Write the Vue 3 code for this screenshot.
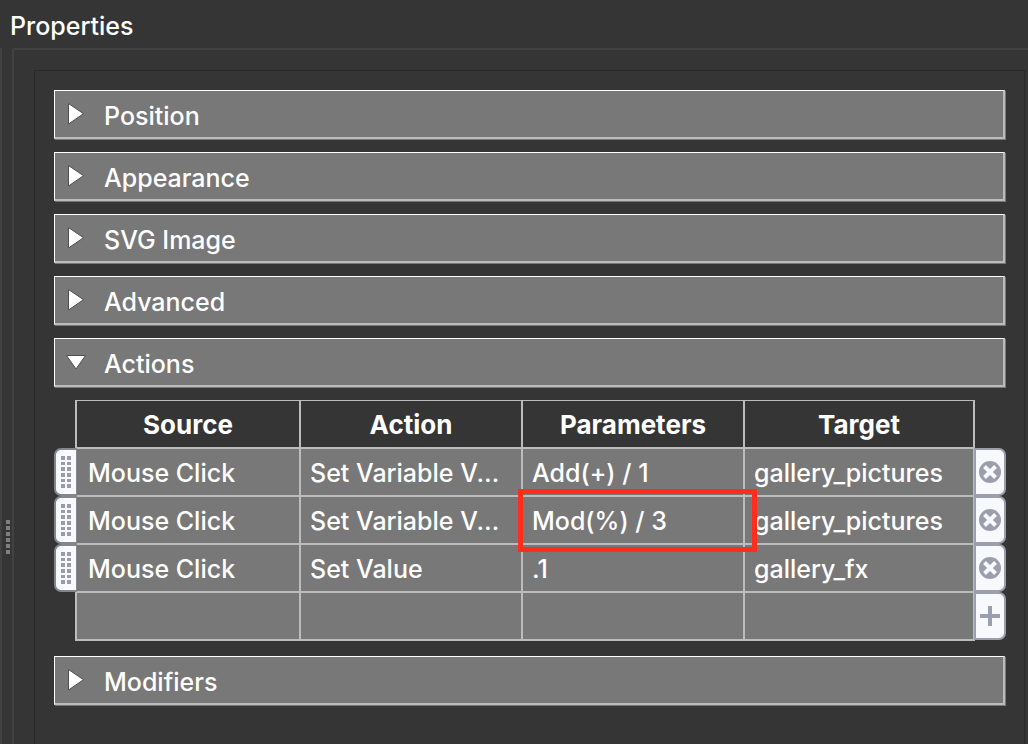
<script setup>
import { ref } from 'vue'

const before = ref([
  { name: 'Position', open: false },
  { name: 'Appearance', open: false },
  { name: 'SVG Image', open: false },
  { name: 'Advanced', open: false },
  { name: 'Actions', open: true },
])
const after = ref([{ name: 'Modifiers', open: false }])

const rows = ref([
  { source: 'Mouse Click', action: 'Set Variable Value', params: 'Add(+) / 1', target: 'gallery_pictures' },
  { source: 'Mouse Click', action: 'Set Variable Value', params: 'Mod(%) / 3', target: 'gallery_pictures', marked: true },
  { source: 'Mouse Click', action: 'Set Value', params: '.1', target: 'gallery_fx' },
])
</script>

<template>
  <main class="window">
    <h1 class="title">Properties</h1>
    <div class="body">
      <div class="splitter">
        <div class="grip"><i v-for="n in 6" :key="n"></i></div>
      </div>
      <section class="frame">
        <div class="panel">
          <button v-for="s in before" :key="s.name" type="button" class="section" :aria-expanded="s.open">
            <svg v-if="s.open" class="arrow" viewBox="0 0 22 22" aria-hidden="true">
              <path d="M1.5 4.5H20.5L11 18Z" fill="#fff" stroke="#505050" />
            </svg>
            <svg v-else class="arrow" viewBox="0 0 22 22" aria-hidden="true">
              <path d="M3.500 .5V21L18.500 10.700Z" fill="#fff" stroke="#505050" />
            </svg>
            <span class="label">{{ s.name }}</span>
          </button>

          <table class="actions">
            <colgroup>
              <col class="c-handle"><col class="c-source"><col class="c-mid"><col class="c-mid"><col class="c-target"><col class="c-tool">
            </colgroup>
            <thead>
              <tr>
                <td class="bare"></td>
                <th class="first" scope="col">Source</th>
                <th scope="col">Action</th>
                <th scope="col">Parameters</th>
                <th scope="col">Target</th>
                <td class="bare"></td>
              </tr>
            </thead>
            <tbody>
              <tr v-for="(r, i) in rows" :key="i">
                <td class="bare">
                  <button type="button" class="handle" aria-label="Move action">
                    <svg viewBox="0 0 10 32" aria-hidden="true">
                      <g fill="#9a9cab">
                        <template v-for="n in 6" :key="n">
                          <rect x="0" :y="[0, 6, 11, 17, 23, 28][n - 1]" width="4" :height="[4, 3, 4, 4, 3, 4][n - 1]" />
                          <rect x="6" :y="[0, 6, 11, 17, 23, 28][n - 1]" width="4" :height="[4, 3, 4, 4, 3, 4][n - 1]" />
                        </template>
                      </g>
                    </svg>
                  </button>
                </td>
                <td class="cell first">{{ r.source }}</td>
                <td class="cell">{{ r.action }}</td>
                <td class="cell" :class="{ marked: r.marked }">{{ r.params }}</td>
                <td class="cell">{{ r.target }}</td>
                <td class="bare">
                  <button type="button" class="tool" aria-label="Remove action">
                    <svg viewBox="0 0 22 22" aria-hidden="true">
                      <circle cx="11" cy="11" r="11" fill="#9b9fad" />
                      <path d="M5.500 5.500L16.500 16.500M16.500 5.500L5.500 16.500" stroke="#f8f9fd" stroke-width="4" />
                    </svg>
                  </button>
                </td>
              </tr>
              <tr>
                <td class="bare"></td>
                <td class="cell first"></td>
                <td class="cell"></td>
                <td class="cell"></td>
                <td class="cell"></td>
                <td class="bare">
                  <button type="button" class="tool" aria-label="Add action">
                    <svg viewBox="0 0 22 22" aria-hidden="true">
                      <path d="M1 11H21M11 1V21" stroke="#9b9fad" stroke-width="4" />
                    </svg>
                  </button>
                </td>
              </tr>
            </tbody>
          </table>

          <button v-for="s in after" :key="s.name" type="button" class="section" :aria-expanded="s.open">
            <svg class="arrow" viewBox="0 0 22 22" aria-hidden="true">
              <path d="M3.500 .5V21L18.500 10.700Z" fill="#fff" stroke="#505050" />
            </svg>
            <span class="label">{{ s.name }}</span>
          </button>
        </div>
      </section>
    </div>
  </main>
</template>

<style>
html,
body {
  background: #353535;
}
</style>

<style scoped>
.window {
  display: flex;
  flex-direction: column;
  min-height: 100vh;
  box-sizing: border-box;
  background: #353535;
  color: #fff;
  font: 500 25px/32px Inter, "Liberation Sans", sans-serif;
}
.title {
  margin: 0;
  padding: 10px 10px 6px;
  font-size: 25px;
  font-weight: 500;
}
.body {
  flex: 1;
  display: flex;
}
.splitter {
  width: 12px;
  flex: none;
  display: flex;
  align-items: center;
  border-left: 2px solid #424242;
  box-sizing: border-box;
  padding: 281px 0 0 4px;
}
.grip {
  display: grid;
  gap: 2px;
}
.grip i {
  width: 4px;
  height: 4px;
  background: #7e7e7e;
}
.frame {
  flex: 1;
  min-width: 0;
  border: solid #424242;
  border-width: 2px 0 0 2px;
  border-top-left-radius: 3px;
  padding: 20px 3px 0 20px;
  display: flex;
}
.panel {
  flex: 1;
  min-width: 0;
  border: 1px solid #292929;
  border-bottom: 0;
  padding: 19px 18px 0 19px;
}
.section {
  display: flex;
  align-items: center;
  gap: 17px;
  width: calc(100% - 1px);
  height: 49px;
  margin: 0 0 13px;
  padding: 0 0 0 10px;
  border: solid;
  border-width: 1px 2px 2px 1px;
  border-color: #fff #bcbcbc #bcbcbc #fff;
  box-shadow: 1px 1px 0 #777;
  background: #787878;
  color: inherit;
  font: inherit;
  text-align: left;
}
.arrow {
  width: 22px;
  height: 22px;
  flex: none;
}
.label {
  padding-top: 3px;
}
.actions {
  width: 100%;
  margin-bottom: 15px;
  table-layout: fixed;
  border-collapse: separate;
  border-spacing: 0;
}
.c-handle { width: 21px; }
.c-source { width: 226px; }
.c-mid { width: 222px; }
.c-tool { width: 31px; }
.actions th,
.cell {
  box-sizing: border-box;
  height: 48px;
  padding: 2px 16px 0 9px;
  border: solid #bcbcbc;
  border-width: 0 2px 2px 0;
  white-space: nowrap;
}
.actions th {
  height: 49px;
  padding: 2px 0 0;
  border-top-width: 1px;
  font-size: 26px;
  font-weight: 700;
  text-align: center;
}
.cell {
  overflow: hidden;
  text-overflow: ellipsis;
  background: #787878;
}
.actions .first {
  border-left-width: 2px;
}
.cell.first {
  padding-left: 11px;
}
.bare {
  padding: 0;
  vertical-align: top;
}
.handle,
.tool {
  position: relative;
  display: flex;
  align-items: center;
  justify-content: center;
  box-sizing: border-box;
  height: 48px;
  margin: -1px 0 0;
  padding: 0;
  background: #f8f9fd;
}
.handle {
  width: 23px;
  border: 2px solid #85868b;
  border-right-width: 1px;
  border-radius: 7px 0 0 7px;
}
.handle svg {
  width: 10px;
  height: 32px;
}
.tool {
  width: 32px;
  margin-left: -1px;
  border: 2px solid #9b9fad;
  border-radius: 0 7px 7px 0;
}
.tool svg {
  width: 22px;
  height: 22px;
}
.marked {
  position: relative;
  overflow: visible;
}
.marked::after {
  content: "";
  position: absolute;
  z-index: 2;
  inset: -8px -14px -9px -5px;
  border: 5px solid #ff2e1c;
}
</style>
